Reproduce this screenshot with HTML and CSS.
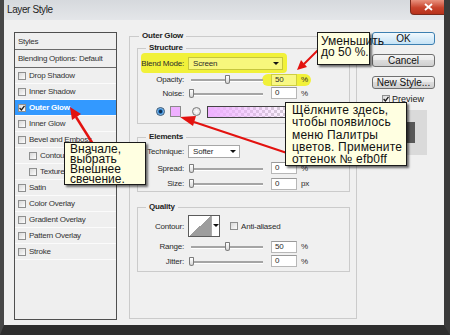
FILE: index.html
```html
<!DOCTYPE html>
<html lang="ru">
<head>
    <meta charset="UTF-8">
    <meta name="viewport" content="width=device-width, initial-scale=1.0">
    <title>Layer Style</title>
    <link rel="stylesheet" href="styles.css">
</head>
<body>

<div class="window">
    <!-- Title bar -->
    <div class="titlebar">
        <span class="title">Layer Style</span>
        <span class="close">
            <svg width="9" height="8" viewBox="0 0 9 8"><path d="M1 1 L8 7 M8 1 L1 7" stroke="#fff" stroke-width="1.8"/></svg>
        </span>
    </div>

    <div class="dialog">
        <!-- Styles list -->
        <ul class="style-list">
            <li class="list-head first">Styles</li>
            <li class="list-head">Blending Options: Default</li>
            <li><span class="cb"></span>Drop Shadow</li>
            <li><span class="cb"></span>Inner Shadow</li>
            <li class="selected"><span class="cb"><svg width="6" height="6" viewBox="0 0 6 6"><path d="M0.6 3 L2.4 4.9 L5.5 0.8" fill="none" stroke="#1b1b1b" stroke-width="1.3"/></svg></span>Outer Glow</li>
            <li><span class="cb"></span>Inner Glow</li>
            <li><span class="cb"></span>Bevel and Emboss</li>
            <li class="sub"><span class="cb"></span>Contour</li>
            <li class="sub"><span class="cb"></span>Texture</li>
            <li><span class="cb"></span>Satin</li>
            <li><span class="cb"></span>Color Overlay</li>
            <li><span class="cb"></span>Gradient Overlay</li>
            <li><span class="cb"></span>Pattern Overlay</li>
            <li><span class="cb"></span>Stroke</li>
        </ul>

        <!-- Outer Glow settings -->
        <fieldset class="panel">
            <legend>Outer Glow</legend>

            <fieldset class="group structure">
                <legend>Structure</legend>
                <div class="row row-blend">
                    <span class="label">Blend Mode:</span>
                    <span class="select select-blend">Screen<i class="arrow"></i></span>
                </div>
                <div class="row row-opacity">
                    <span class="label">Opacity:</span>
                    <span class="slider" style="--v:50"><i class="thumb"></i></span>
                    <span class="value marked"><span class="field">50</span><span class="unit">%</span></span>
                </div>
                <div class="row row-noise">
                    <span class="label">Noise:</span>
                    <span class="slider" style="--v:0"><i class="thumb"></i></span>
                    <span class="value"><span class="field">0</span><span class="unit">%</span></span>
                </div>
                <div class="row row-color">
                    <span class="radio on"></span>
                    <span class="swatch"></span>
                    <span class="radio off"></span>
                    <span class="gradient"></span>
                </div>
            </fieldset>

            <fieldset class="group elements">
                <legend>Elements</legend>
                <div class="row row-tech">
                    <span class="label">Technique:</span>
                    <span class="select select-tech">Softer<i class="arrow"></i></span>
                </div>
                <div class="row row-spread">
                    <span class="label">Spread:</span>
                    <span class="slider" style="--v:0"><i class="thumb"></i></span>
                    <span class="value"><span class="field">0</span><span class="unit">%</span></span>
                </div>
                <div class="row row-size">
                    <span class="label">Size:</span>
                    <span class="slider" style="--v:0"><i class="thumb"></i></span>
                    <span class="value"><span class="field">0</span><span class="unit">px</span></span>
                </div>
            </fieldset>

            <fieldset class="group quality">
                <legend>Quality</legend>
                <div class="row row-contour">
                    <span class="label">Contour:</span>
                    <span class="contour"><span class="contour-curve"></span><span class="contour-drop"><i class="arrow"></i></span></span>
                    <span class="cb anti"></span><span class="anti-text">Anti-aliased</span>
                </div>
                <div class="row row-range">
                    <span class="label">Range:</span>
                    <span class="slider" style="--v:50"><i class="thumb"></i></span>
                    <span class="value"><span class="field">50</span><span class="unit">%</span></span>
                </div>
                <div class="row row-jitter">
                    <span class="label">Jitter:</span>
                    <span class="slider" style="--v:0"><i class="thumb"></i></span>
                    <span class="value"><span class="field">0</span><span class="unit">%</span></span>
                </div>
            </fieldset>
        </fieldset>

        <!-- Buttons -->
        <div class="buttons">
            <div class="btn btn-ok">OK</div>
            <div class="btn">Cancel</div>
            <div class="btn">New Style...</div>
            <div class="preview-row">
                <span class="cb"><svg width="6" height="6" viewBox="0 0 6 6"><path d="M0.6 3 L2.4 4.9 L5.5 0.8" fill="none" stroke="#1b1b1b" stroke-width="1.3"/></svg></span>Preview
            </div>
            <div class="preview-box"><div class="preview-inner"></div></div>
        </div>
    </div>

    <!-- Red arrows -->
    <svg class="arrows" width="450" height="335" viewBox="0 0 450 335">
        <g fill="#e3120f" stroke="#e3120f">
            <line x1="319" y1="49" x2="304" y2="64" stroke-width="2"/>
            <polygon points="297,70 307,67 301,60" stroke="none"/>
            <line x1="287" y1="153" x2="194" y2="122" stroke-width="2"/>
            <polygon points="180,117 196,116 193,126" stroke="none"/>
            <line x1="93" y1="144" x2="76" y2="117" stroke-width="2.5"/>
            <polygon points="70,107 81,114 72,120" stroke="none"/>
        </g>
    </svg>

    <!-- Callouts -->
    <div class="callout callout-opacity">Уменьшить<br>до 50 %.</div>
    <div class="callout callout-color">Щёлкните здесь,<br>чтобы появилось<br>меню Палитры<br>цветов. Примените<br>оттенок № efb0ff</div>
    <div class="callout callout-glow">Вначале,<br>выбрать<br>Внешнее<br>свечение.</div>
</div>

</body>
</html>
```

FILE: styles.css
```css
/* Layer Style dialog */
* {
    box-sizing: border-box;
}

body {
    margin: 0;
    font-family: "Liberation Sans", Arial, sans-serif;
    background: #f0f0f0;
    color: #2b2b2b;
}

.window {
    position: relative;
    width: 450px;
    height: 335px;
    border-left: 4px solid #474747;
    border-right: 6px solid #3a3a3a;
    border-bottom: 10px solid #2e2e2e;
    background: #f0f0f0;
    overflow: hidden;
}

/* Title bar */
.titlebar {
    display: flex;
    height: 20px;
    background: linear-gradient(#d6d9dd, #e4e6e9);
}

.title {
    padding: 4px 0 0 3px;
    font-size: 10px;
    letter-spacing: -0.4px;
    color: #1e1e1e;
}

.close {
    display: flex;
    align-items: center;
    justify-content: center;
    margin-left: auto;
    margin-right: -3px;
    width: 37px;
    height: 15px;
    border: 1px solid #7a2a1c;
    border-top: none;
    border-radius: 0 0 4px 4px;
    background: linear-gradient(#e9927e, #c8432c 55%, #b8321c);
}

/* Dialog body */
.dialog {
    display: flex;
    align-items: flex-start;
    height: 305px;
    padding: 12px 9px 5px 10px;
}

/* Styles list */
.style-list {
    flex: none;
    width: 103px;
    height: 288px;
    margin: 0;
    padding: 0;
    list-style: none;
    border: 1px solid #4f4f4f;
    background: #efefef;
    font-size: 8px;
    letter-spacing: -0.25px;
    color: #333;
}

.style-list li {
    display: flex;
    align-items: center;
    height: 16px;
    padding-left: 3px;
    border-bottom: 1px solid #fbfbfb;
}

.style-list .list-head {
    height: 18px;
    border-bottom: 1px solid #6a6a6a;
}

.style-list .list-head.first {
    height: 17px;
}

.style-list .sub {
    padding-left: 14px;
}

.style-list .selected {
    background: #3399ff;
    color: #fff;
    font-weight: bold;
}

.cb {
    display: inline-flex;
    align-items: center;
    justify-content: center;
    flex: none;
    width: 8px;
    height: 8px;
    margin-right: 3px;
    border: 1px solid #8e8f8f;
    background: linear-gradient(135deg, #d8d8d8, #fdfdfd);
}

/* Group boxes */
fieldset {
    margin: 0;
    min-width: 0;
    border: 1px solid #cbcbcb;
}

legend {
    padding: 0 3px;
    font-size: 8px;
    font-weight: bold;
    line-height: 10px;
    letter-spacing: -0.2px;
    color: #222;
}

.panel {
    flex: none;
    width: 228px;
    height: 288px;
    margin: -1px 15px 0 12px;
    padding: 0 6px 0 7px;
}

.panel > legend {
    margin-left: 2px;
}

.group {
    padding: 0;
}

.group > legend {
    margin-left: 8px;
}

.structure {
    margin-top: 2px;
}

.elements {
    margin-top: 8px;
}

.quality {
    margin-top: 10px;
    padding-bottom: 2px;
}

/* Rows */
.row {
    display: flex;
    align-items: center;
    font-size: 8px;
    letter-spacing: -0.2px;
    color: #2b2b2b;
}

.label {
    flex: none;
    width: 46px;
    margin-right: 4px;
    text-align: right;
}

.row-blend {
    height: 20px;
    width: 146px;
    margin-left: 3px;
    background: #f1f13a;
    border-radius: 4px;
}

.row-blend .label {
    width: 43px;
}

.row-opacity { height: 13px; }
.row-noise { height: 14px; }
.row-color { height: 23px; }
.row-tech { height: 18px; }
.row-spread { height: 16px; }
.row-size { height: 15px; }
.row-contour { height: 28px; }
.row-range { height: 13px; }
.row-jitter { height: 16px; }

.select {
    position: relative;
    flex: none;
    height: 13px;
    padding-left: 4px;
    line-height: 11px;
    border: 1px solid #a7a7a7;
    background: #fff;
}

.select-blend {
    width: 95px;
    border-color: #c6c63c;
    background: #f7f77c;
}

.select-tech {
    width: 52px;
}

.arrow {
    position: absolute;
    right: 3px;
    top: 4px;
    border-left: 3px solid transparent;
    border-right: 3px solid transparent;
    border-top: 3px solid #111;
}

/* Sliders */
.slider {
    position: relative;
    flex: none;
    width: 75px;
    height: 9px;
}

.slider::before {
    content: "";
    position: absolute;
    left: 3px;
    right: 0;
    top: 4px;
    height: 2px;
    background: #a5a5a5;
    border-bottom: 1px solid #fff;
}

.thumb {
    position: absolute;
    top: 0;
    left: calc(1px + var(--v) * 0.72px);
    width: 5px;
    height: 9px;
    border: 1px solid #7b7b7b;
    border-radius: 1px 1px 3px 3px;
    background: linear-gradient(#ffffff, #d8d8d8);
}

.value {
    display: flex;
    align-items: center;
    margin-left: 8px;
}

.value.marked {
    height: 12px;
    margin-left: -1px;
    padding: 0 3px 0 9px;
    border-radius: 6px;
    background: #f1f13a;
}

.field {
    width: 26px;
    height: 12px;
    padding-left: 3px;
    line-height: 10px;
    border: 1px solid #b7b7b7;
    border-top-color: #999;
    background: #fff;
}

.value.marked .field {
    border-color: #cfcf40;
    background: #f8f884;
}

.unit {
    margin-left: 4px;
}

/* Colour row */
.radio {
    flex: none;
    width: 9px;
    height: 9px;
    border-radius: 50%;
    border: 1px solid #7a7a7a;
    background: radial-gradient(circle, #fff, #d4d4d4);
}

.radio.on {
    margin-left: 18px;
    border-color: #2f5274;
    background: radial-gradient(circle, #0f2f52 0 1.3px, #3d93e0 2.3px, #cde2f4 4px);
}

.radio.off {
    margin-left: 11px;
}

.swatch {
    flex: none;
    width: 11px;
    height: 11px;
    margin-left: 5px;
    border: 1px solid #8a8a8a;
    background: #efb0ff;
}

.gradient {
    flex: none;
    width: 92px;
    height: 12px;
    margin-left: 6px;
    border: 1px solid #444;
    background:
        linear-gradient(to right, #efb0ff, rgba(239, 176, 255, 0)),
        conic-gradient(#cfcfcf 25%, #fff 0 50%, #cfcfcf 0 75%, #fff 0) 0 0 / 6px 6px;
}

/* Contour picker */
.contour {
    display: flex;
    flex: none;
    height: 22px;
    border: 1px solid #5b5b5b;
    background: #fff;
}

.contour-curve {
    width: 23px;
    border-right: 1px solid #aaa;
    background: linear-gradient(to top left, #9d9d9d 50%, #fff 50%);
}

.contour-drop {
    position: relative;
    width: 7px;
}

.contour-drop .arrow {
    right: 0;
    top: 8px;
}

.cb.anti {
    margin-left: 10px;
}

/* Right column */
.buttons {
    flex: none;
    width: 63px;
}

.btn {
    height: 13px;
    margin-bottom: 9px;
    border: 1px solid #707070;
    border-radius: 3px;
    background: linear-gradient(#f4f4f4, #ebebeb 45%, #dcdcdc 50%, #cfcfcf);
    font-size: 10px;
    line-height: 11px;
    text-align: center;
    color: #111;
}

.btn-ok {
    border-color: #3c7fb1;
    background: linear-gradient(#f2f9fd, #dbedf9 50%, #c6e3f6);
}

.preview-row {
    display: flex;
    align-items: center;
    height: 10px;
    margin-top: -4px;
    padding-left: 10px;
    font-size: 9px;
    color: #222;
}

.preview-row .cb {
    margin-right: 2px;
}

.preview-box {
    display: flex;
    align-items: center;
    justify-content: center;
    width: 46px;
    height: 45px;
    margin: 6px 0 0 9px;
    background: #dadada;
}

.preview-inner {
    width: 22px;
    height: 21px;
    background: #585858;
}

/* Annotations */
.arrows {
    position: absolute;
    left: -4px;
    top: 0;
    pointer-events: none;
}

.callout {
    position: absolute;
    border: 1px solid #1a1a1a;
    background: #ffffe1;
    box-shadow: 2px 2px 2px rgba(0, 0, 0, 0.55);
    font-size: 12px;
    color: #111;
    white-space: nowrap;
}

.callout-opacity {
    left: 313px;
    top: 32px;
    width: 53px;
    height: 33px;
    padding: 3px 0 0 3px;
    line-height: 11px;
}

.callout-color {
    left: 281px;
    top: 102px;
    width: 122px;
    height: 64px;
    padding: 1px 0 0 6px;
    line-height: 12.25px;
    letter-spacing: 0.2px;
}

.callout-glow {
    left: 60px;
    top: 142px;
    width: 82px;
    height: 43px;
    padding: 1px 0 0 5px;
    line-height: 10px;
}
```
